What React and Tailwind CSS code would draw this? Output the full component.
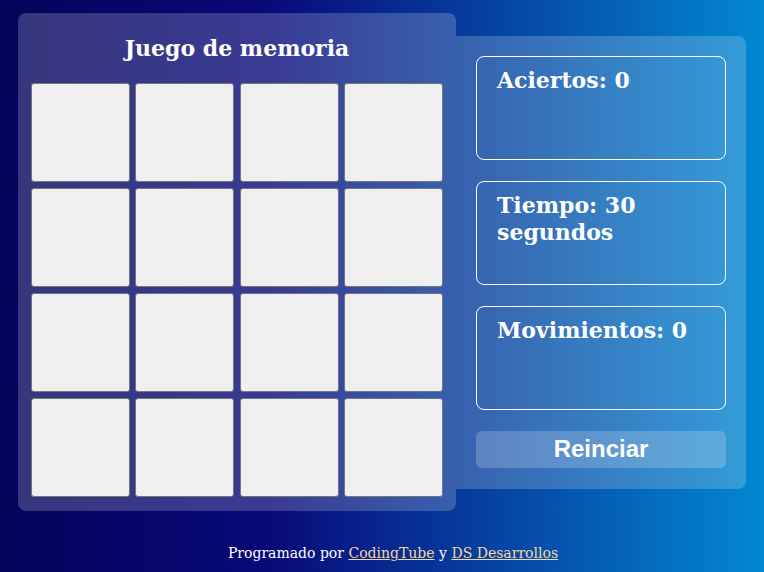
import React, { useState } from 'react';

const serif = "font-['Georgia','DejaVu_Serif',serif]";

const Card = () => (
  <button className="w-[99px] h-[99px] bg-[#efefef] border border-[#767676] rounded-[3px]" />
);

const StatBox = ({ children }) => (
  <div className="h-[104px] border border-white rounded-lg px-5 pt-[10px]">
    <h2 className={`${serif} text-[22px] leading-[27px] font-bold text-white`}>{children}</h2>
  </div>
);

const App = () => {
  const [hits] = useState(0);
  const [moves] = useState(0);
  const [time] = useState(30);
  const cards = Array.from({ length: 16 }, (_, i) => i);

  return (
    <div className="min-h-[572px] w-full bg-[linear-gradient(90deg,#03045a_0%,#090979_35%,#0288d1_100%)] flex flex-col items-center pt-[13px]">
      <div className="flex items-center">
        {/* Board */}
        <div className="bg-white/20 rounded-lg w-[438px] h-[498px] pt-[22px] px-[13px] relative z-10">
          <h1 className={`${serif} text-[22px] leading-[27px] font-bold text-white text-center`}>Juego de memoria</h1>
          <div className="grid grid-cols-4 gap-x-[5px] gap-y-[6px] mt-[21px]">
            {cards.map((c) => <Card key={c} />)}
          </div>
        </div>

        {/* Stats */}
        <div className="bg-white/20 rounded-r-lg w-[290px] h-[453px] p-5 flex flex-col gap-[21px]">
          <StatBox>Aciertos: {hits}</StatBox>
          <StatBox>Tiempo: {time} segundos</StatBox>
          <StatBox>Movimientos: {moves}</StatBox>
          <button className="h-[37px] rounded-md bg-white/20 text-white font-bold text-[24px] leading-none font-['Liberation_Sans',Arial,sans-serif]">
            Reinciar
          </button>
        </div>
      </div>

      <footer className={`${serif} text-white text-[14px] mt-[32px] pl-[22px]`}>
        Programado por <a href="#" className="text-[#f5d6a1] underline">CodingTube</a> y{' '}
        <a href="#" className="text-[#f5d6a1] underline">DS Desarrollos</a>
      </footer>
    </div>
  );
};

export default App;
